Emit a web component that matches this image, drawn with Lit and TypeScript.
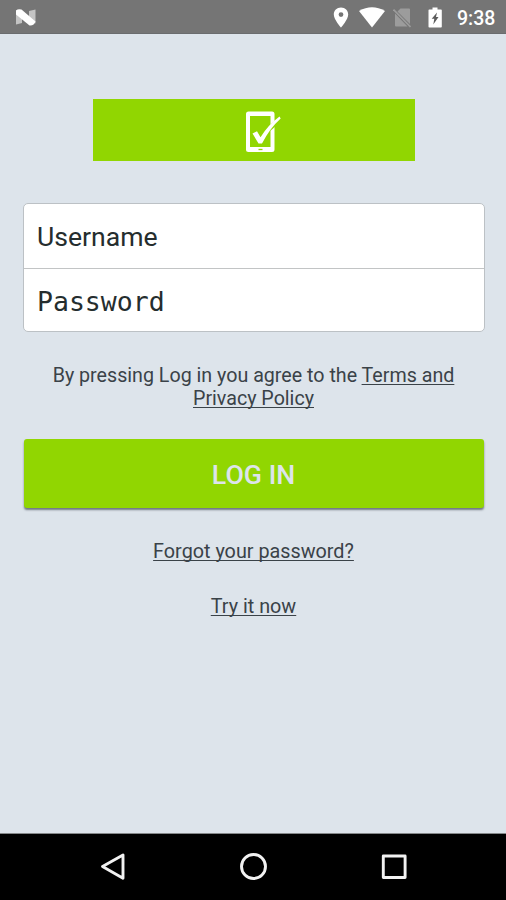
import { LitElement, html, css } from "lit";
import { customElement } from "lit/decorators.js";

@customElement("status-bar")
class StatusBar extends LitElement {
  static styles = css`
    :host {
      display: flex;
      align-items: center;
      height: 34px;
      box-sizing: border-box;
      padding: 0 10px 0 15px;
      background: #757575;
      border-bottom: 1px solid #6a6c6e;
      color: #fff;
    }
    svg { display: block; flex: none; }
    .space { flex: 1; }
    .pin { margin-right: 10px; }
    .wifi { margin-right: 8px; }
    .sim { margin-right: 17px; }
    .battery { margin-right: 15px; }
    .clock {
      width: 39px;
      font: 500 19.5px/33px Roboto, sans-serif;
      white-space: nowrap;
      padding-top: 3px;
    }
  `;
  render() {
    return html`
      <svg width="22" height="33" viewBox="0 0 22 33">
        <path fill="#c4c4c4" d="M1 10l6 5v8l-6 1.500zM14 11l6.500-1.500v14l-6.500-5z" />
        <path fill="#fff" d="M1 10.500Q3 8.500 6.500 9.500L20.500 21.500q-1.500 4.500-6 4L1 14.500z" />
      </svg>
      <span class="space"></span>
      <svg class="pin" width="16" height="33" viewBox="0 0 16 33">
        <path fill="#fff" fill-rule="evenodd" d="M8 7.500c-4.200 0-7.200 3-7.200 7 0 5 7.200 13 7.200 13s7.200-8 7.200-13c0-4-3-7-7.200-7zm0 4.700a2.400 2.400 0 1 1 0 4.800 2.400 2.400 0 0 1 0-4.800z" />
      </svg>
      <svg class="wifi" width="26" height="33" viewBox="0 0 26 33">
        <path fill="#fff" d="M0 11Q13 3.500 26 11L13 27.500z" />
      </svg>
      <svg class="sim" width="18" height="33" viewBox="0 0 18 33">
        <path fill="#9c9c9c" d="M7.500 8.500h8.500q1 0 1 1V24L4.500 11.500zM2 13.500L14.500 26.500H3q-1 0-1-1z" />
        <path stroke="#9c9c9c" stroke-width="1.700" d="M.5 9.500L17.500 27" />
      </svg>
      <svg class="battery" width="14" height="33" viewBox="0 0 14 33">
        <path fill="#fff" d="M4.500 7.500h5V9.500H13q.8 0 .8.800V26.700q0 .8-.8.800H1.300q-.8 0-.8-.8V10.300q0-.8.8-.8H4.500z" />
        <path fill="#5c5c5c" d="M9 12.500L3.700 18.700H6.300L5.300 24.500 10.500 17H8z" />
      </svg>
      <span class="clock">9:38</span>
    `;
  }
}

@customElement("nav-bar")
class NavBar extends LitElement {
  static styles = css`
    :host {
      display: flex;
      justify-content: space-between;
      align-items: center;
      height: 67px;
      box-sizing: border-box;
      padding: 0 97px 0 99px;
      border-top: 1px solid #85888a;
      background: #000;
    }
    svg { display: block; fill: none; stroke: #f2f2f2; stroke-width: 2.900; stroke-linejoin: round; }
  `;
  render() {
    return html`
      <svg width="28" height="30" viewBox="0 0 28 30"><path d="M3.500 14.500L24 3v23.200z" /></svg>
      <svg width="28" height="30" viewBox="0 0 28 30"><circle cx="13.500" cy="14.500" r="12" /></svg>
      <svg width="28" height="30" viewBox="0 0 28 30"><rect x="2.300" y="4" width="21.800" height="21.500" /></svg>
    `;
  }
}

@customElement("app-root")
class AppRoot extends LitElement {
  static styles = css`
    :host {
      display: flex;
      flex-direction: column;
      width: 100%;
      height: 900px;
      overflow: hidden;
      background: #dde4eb;
      font-family: Roboto, sans-serif;
      color: #3a4248;
    }
    main {
      flex: 1;
      display: flex;
      flex-direction: column;
      align-items: center;
      padding: 65px 21px 0 22px;
    }
    .brand {
      width: 322px;
      height: 62px;
      display: flex;
      justify-content: center;
      background: #91d601;
    }
    .fields {
      width: 462px;
      height: 129px;
      box-sizing: border-box;
      margin-top: 42px;
      border: 1px solid #bcc1c5;
      border-radius: 5px;
      background: #fff;
      color: #252d2e;
    }
    .field {
      height: 64px;
      box-sizing: border-box;
      padding-left: 13.500px;
      font-size: 26.600px;
      line-height: 65px;
    }
    .field + .field {
      border-top: 1px solid #c2c4c5;
      height: 63px;
    }
    .password { font-family: "DejaVu Sans Mono", monospace; font-size: 26.500px; line-height: 66px; }
    .terms {
      margin: 32px 0 0;
      font-size: 19.670px;
      line-height: 23px;
      text-align: center;
      white-space: nowrap;
    }
    a {
      color: inherit;
      text-decoration: underline;
      text-decoration-thickness: 1px;
      text-underline-offset: 2px;
      text-decoration-skip-ink: none;
    }
    .login {
      width: 460px;
      height: 69px;
      margin-top: 29px;
      border: 0;
      padding: 3px 0 0;
      border-radius: 3px;
      background: #91d601;
      box-shadow: 0 2px 2px rgba(40, 50, 60, 0.6);
      color: #dde4eb;
      font: 500 26.700px/66px Roboto, sans-serif;
    }
    .link { font-size: 19.800px; line-height: 24px; }
    .forgot { margin-top: 32px; }
    .try { margin-top: 31px; }
  `;
  render() {
    return html`
      <status-bar></status-bar>
      <main>
        <div class="brand">
          <svg width="62" height="62" viewBox="0 0 62 62" fill="none" stroke="#fff">
            <path fill="#fff" stroke="none" fill-rule="evenodd" d="M25.500 12.500h23.500q2.500 0 2.500 2.500v35.500q0 2.500-2.500 2.500H25.500q-2.500 0-2.500-2.500V15q0-2.500 2.500-2.500zm1.500 4.500v31h20.500V17z" />
            <path stroke="#91d601" stroke-width="4.500" d="M46 30L54 23" />
            <path fill="#fff" stroke="none" d="M29.500 34.500l4.500-2.300 3.500 6Q45 26 56.500 17.500l1.200 2Q47 29 39 44.500h-3.500z" />
            <path stroke="#91d601" stroke-width="1.300" d="M35.500 50.500h4" />
          </svg>
        </div>
        <div class="fields">
          <div class="field">Username</div>
          <div class="field password">Password</div>
        </div>
        <p class="terms">By pressing Log in you agree to the <a>Terms and<br />Privacy Policy</a></p>
        <button class="login">LOG IN</button>
        <a class="link forgot">Forgot your password?</a>
        <a class="link try">Try it now</a>
      </main>
      <nav-bar></nav-bar>
    `;
  }
}
